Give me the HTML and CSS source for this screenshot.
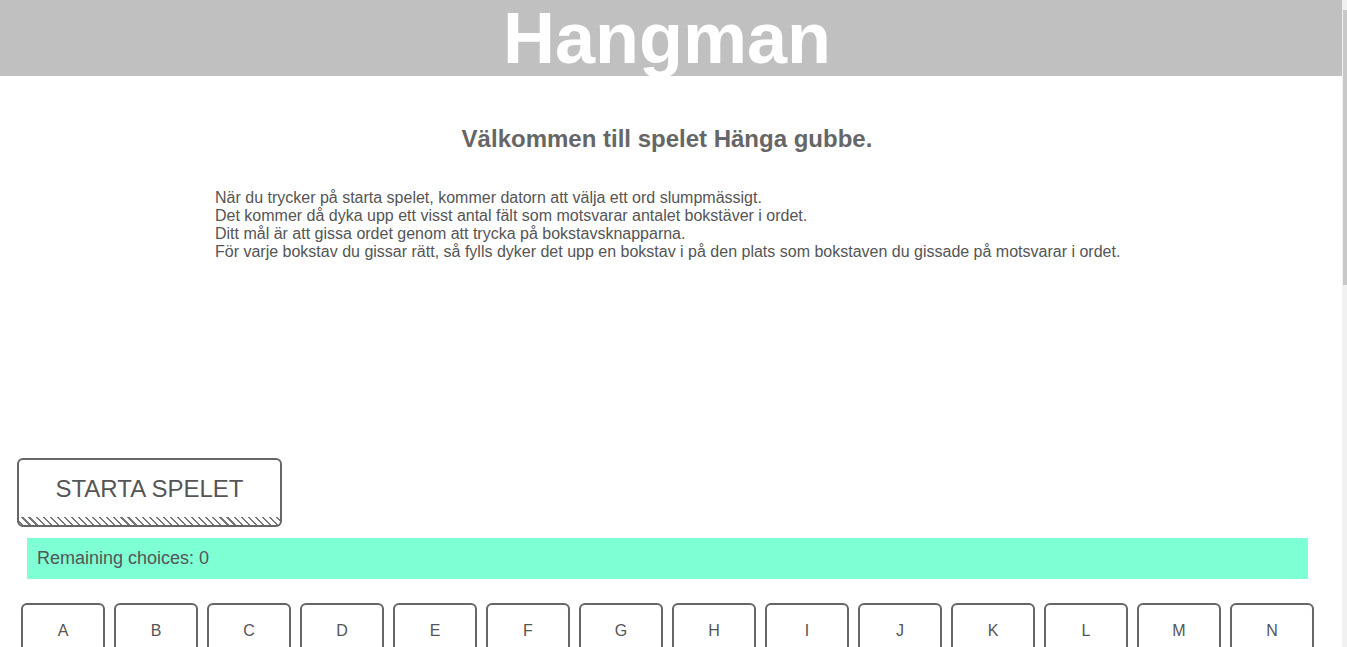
FILE: index.html
```html
<!DOCTYPE html>
<html lang="sv">
<head>
<meta charset="utf-8">
<title>Hangman</title>
<link rel="stylesheet" href="styles.css">
</head>
<body>
<div class="page">
<header class="top">
  <h1 class="logo">Hangman</h1>
</header>
<main class="content">
  <h2 class="welcome">Välkommen till spelet Hänga gubbe.</h2>
  <p class="intro">När du trycker på starta spelet, kommer datorn att välja ett ord slumpmässigt.<br>
Det kommer då dyka upp ett visst antal fält som motsvarar antalet bokstäver i ordet.<br>
Ditt mål är att gissa ordet genom att trycka på bokstavsknapparna.<br>
För varje bokstav du gissar rätt, så fylls dyker det upp en bokstav i på den plats som bokstaven du gissade på motsvarar i ordet.</p>
  <div class="word-area"></div>
  <button class="start">STARTA SPELET</button>
  <div class="remaining">Remaining choices: 0</div>
  <div class="letters">
    <button class="key">A</button><button class="key">B</button><button class="key">C</button><button class="key">D</button><button class="key">E</button><button class="key">F</button><button class="key">G</button><button class="key">H</button><button class="key">I</button><button class="key">J</button><button class="key">K</button><button class="key">L</button><button class="key">M</button><button class="key">N</button><button class="key">O</button><button class="key">P</button><button class="key">Q</button><button class="key">R</button><button class="key">S</button><button class="key">T</button><button class="key">U</button><button class="key">V</button><button class="key">W</button><button class="key">X</button><button class="key">Y</button><button class="key">Z</button><button class="key">Å</button><button class="key">Ä</button><button class="key">Ö</button>
  </div>
</main>
</div>
<div class="scrollbar" aria-hidden="true"><div class="thumb"></div></div>
</body>
</html>
```

FILE: styles.css
```css
body {
  margin: 0;
  font-family: "Liberation Sans", Arial, sans-serif;
  color: #555;
  background: #fff;
}
.page {
  width: 1342px;
}
.scrollbar {
  position: fixed;
  top: 0;
  right: 0;
  width: 5px;
  height: 100vh;
  background: #f1f1f1;
}
.thumb {
  margin: 10px 0 0 1px;
  width: 4px;
  height: 275px;
  background: #c8c8c8;
}
.top {
  background: #c0c0c0;
  height: 76px;
  overflow: hidden;
}
.logo {
  margin: 0;
  text-align: center;
  font-size: 72px;
  line-height: 76px;
  font-weight: bold;
  color: #fff;
  transform: translateX(-4px);
}
.content {
  padding-bottom: 40px;
}
.welcome {
  margin: 49px 0 0;
  text-align: center;
  font-size: 24px;
  font-weight: bold;
  color: #666;
  transform: translateX(-4px);
}
.intro {
  margin: 36px 0 0 215px;
  font-size: 16px;
  line-height: 18px;
  color: #555;
}
.word-area {
  height: 197px;
}
.start {
  display: block;
  margin: 0 0 0 17px;
  width: 265px;
  height: 69px;
  padding: 0 0 8px;
  border: 2px solid #666;
  border-radius: 6px;
  background-color: #fff;
  background-image: repeating-linear-gradient(45deg, #fff 0 2px, #777 2px 3.5px, #fff 3.5px 5px);
  background-size: 100% 8px;
  background-position: bottom;
  background-repeat: no-repeat;
  font-family: "Liberation Sans", Arial, sans-serif;
  font-size: 24px;
  color: #555;
}
.remaining {
  margin: 11px 34px 0 27px;
  height: 41px;
  background: #7fffd4;
  display: flex;
  align-items: center;
  padding-left: 10px;
  font-size: 18px;
  color: #555;
}
.letters {
  display: flex;
  flex-wrap: wrap;
  gap: 9px;
  margin: 24px 0 0 21px;
}
.key {
  width: 84px;
  height: 55px;
  border: 2px solid #666;
  border-radius: 6px;
  background: #fff;
  font-family: "Liberation Sans", Arial, sans-serif;
  font-size: 16px;
  color: #555;
  padding: 0;
}
```
